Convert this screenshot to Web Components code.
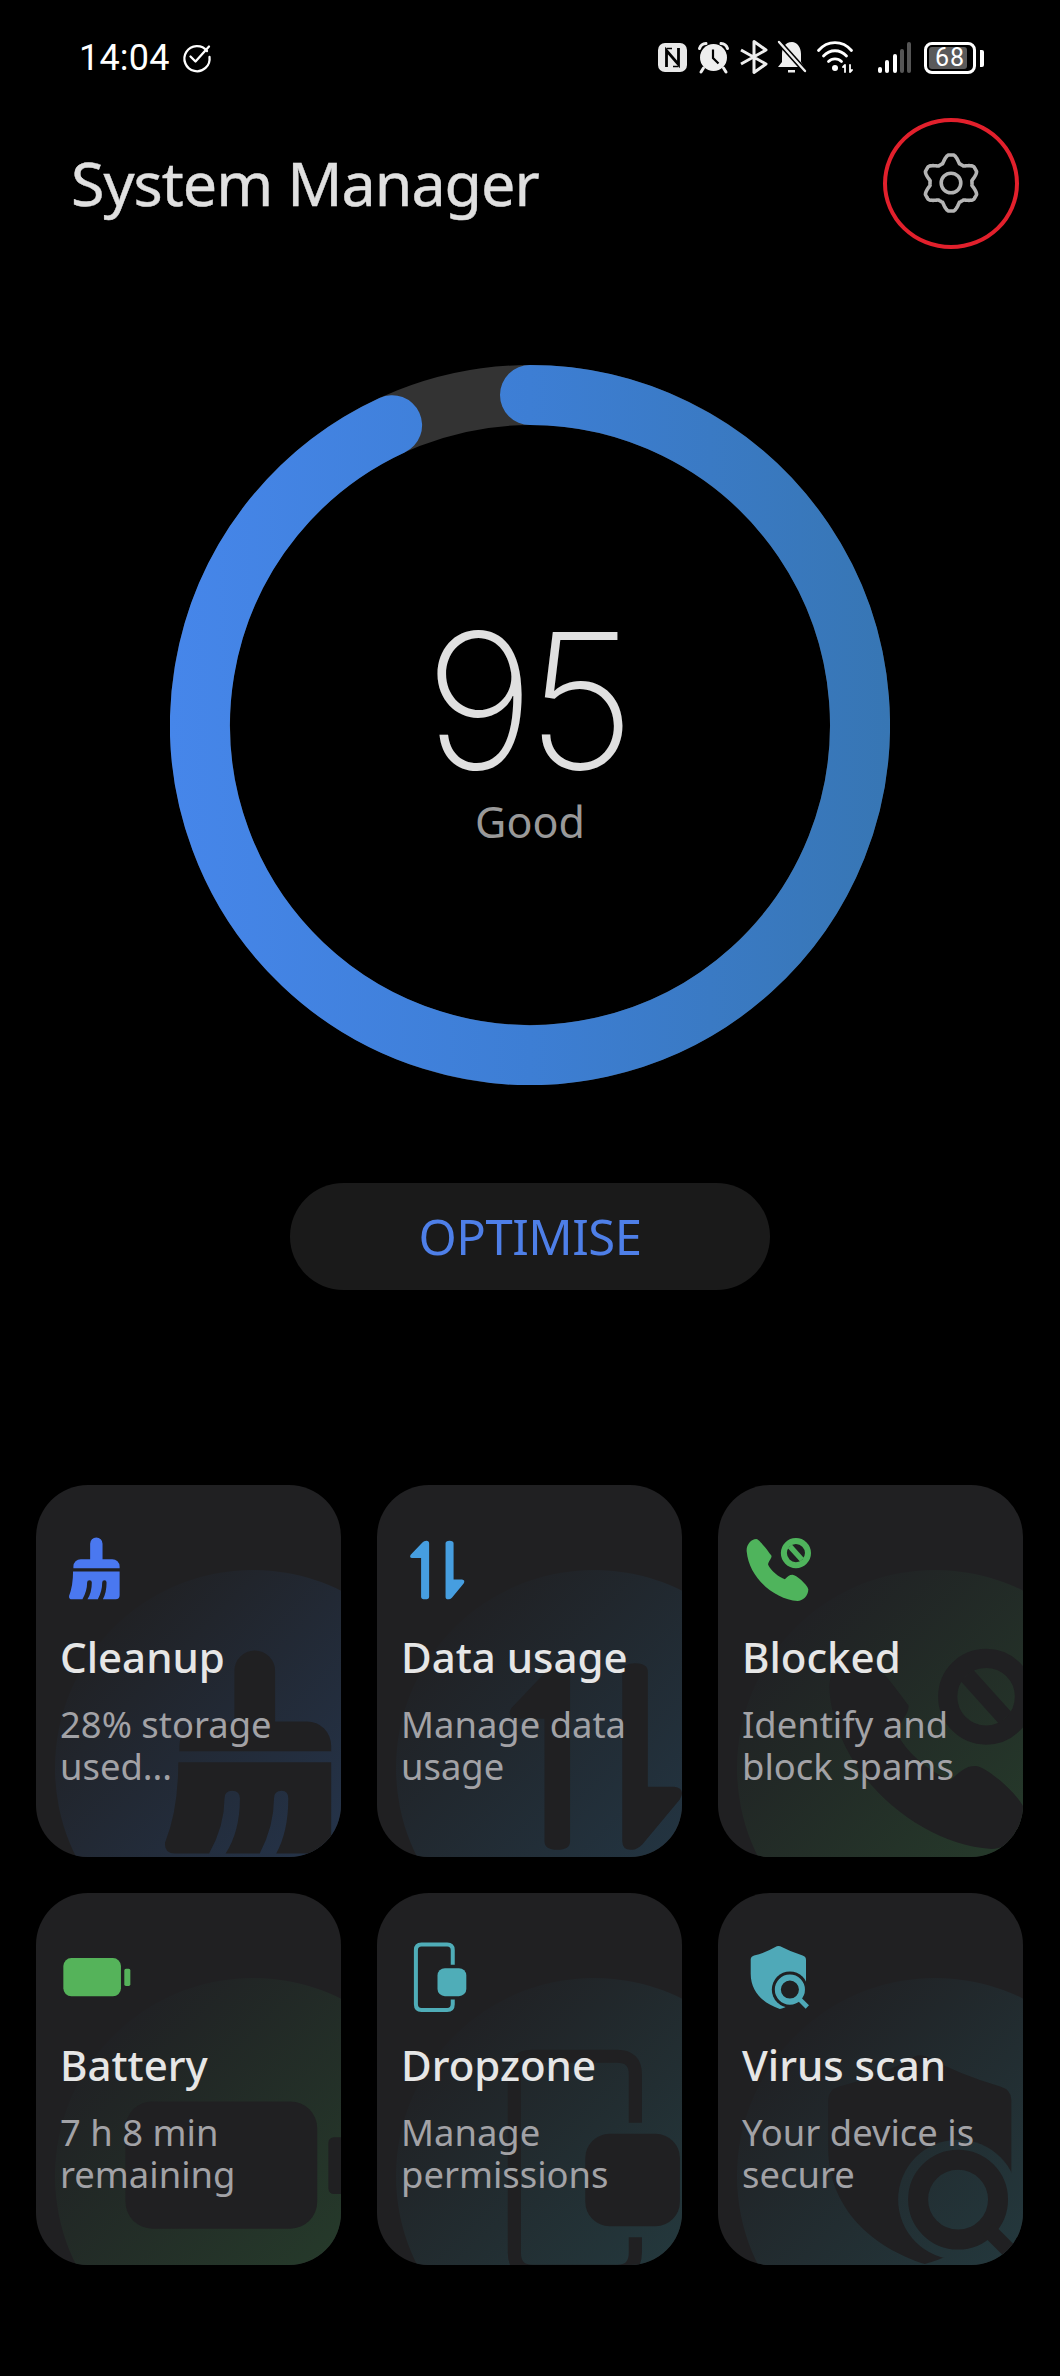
<!DOCTYPE html>
<html lang="en">
<head>
<meta charset="utf-8">
<title>System Manager</title>
<style>
  html, body { margin: 0; background: #000; }
  body { width: 1060px; height: 2376px; overflow: hidden; font-family: 'Noto Sans', sans-serif; }
</style>
</head>
<body>
<system-manager>
  <status-bar time="14:04" level="68"></status-bar>
  <page-header>System Manager</page-header>
  <score-ring score="95" label="Good"></score-ring>
  <action-button>OPTIMISE</action-button>
  <tool-grid>
    <tool-card icon="broom" tint="#25354d">
      <span slot="title">Cleanup</span>28% storage<br>used...
    </tool-card>
    <tool-card icon="arrows" tint="#233644">
      <span slot="title">Data usage</span>Manage data<br>usage
    </tool-card>
    <tool-card icon="phone" tint="#263c2b">
      <span slot="title">Blocked</span>Identify and<br>block spams
    </tool-card>
    <tool-card icon="battery" tint="#263c2b">
      <span slot="title">Battery</span>7 h 8 min<br>remaining
    </tool-card>
    <tool-card icon="dropzone" tint="#243a3f">
      <span slot="title">Dropzone</span>Manage<br>permissions
    </tool-card>
    <tool-card icon="shield" tint="#243a3f">
      <span slot="title">Virus scan</span>Your device is<br>secure
    </tool-card>
  </tool-grid>
</system-manager>

<script>
// Card icons, drawn on a 200x200 box. The same shapes are reused large behind the text.
const CARD_ICONS = {
  broom: {
    color: '#4a78f0', scale: 3.3, left: 106, top: 154,
    body: `<path fill="currentColor" d="M84 29a18.5 18.5 0 0 1 37 0V75h29a22 22 0 0 1 22 22v5H34v-5a22 22 0 0 1 22-22H84Z"/>
      <path fill="currentColor" d="M33 112H172V183Q172 195 160 195H122Q133 175 133 145Q133 138 127 138Q120 138 120 145Q120 170 107 195H76Q89 175 89 145Q89 138 82 138Q75 138 75 145Q75 170 61 195H30Q20 195 21 185Q33 155 33 112Z"/>`
  },
  arrows: {
    color: '#469ee0', scale: 3.2, left: 110, top: 157,
    body: `<path fill="currentColor" d="M78 28Q78 20 70 20Q62 20 58 25L23 62Q18 70 27 72H54V187Q54 195 66 195Q78 195 78 187Z"/>
      <path fill="currentColor" d="M127 28Q127 20 139 20Q151 20 151 28V136H176Q187 138 181 148L146 190Q140 196 135 195Q127 195 127 187Z"/>`
  },
  phone: {
    color: '#4fb45c', scale: 3.2, left: 103, top: 151,
    body: `<path fill="currentColor" d="M8 52C6 34 20 15 37 15C45 15 75 55 82 65C84 72 72 82 72 92C80 110 105 130 122 135C130 128 135 122 145 122C155 122 188 150 192 165C192 185 175 200 160 200C90 195 15 130 8 52Z"/>
      <circle cx="155" cy="57" r="36" fill="none" stroke="currentColor" stroke-width="18"/>
      <path d="M137 37L173 77" stroke="currentColor" stroke-width="16" fill="none"/>`
  },
  battery: {
    color: '#55b35a', scale: 3.35, left: 85, top: 155,
    body: `<rect x="4" y="48" width="172" height="114" rx="24" fill="currentColor"/>
      <rect x="186" y="80" width="18" height="51" rx="5" fill="currentColor"/>`
  },
  dropzone: {
    color: '#4fadb8', scale: 3.3, left: 95, top: 155,
    body: `<path fill="none" stroke="currentColor" stroke-width="12" d="M148.500 68V24Q148.500 7.500 132 7.500H55Q38.500 7.500 38.500 24V186Q38.500 203 55 203H132Q148.500 203 148.500 186V172"/>
      <rect x="103" y="78" width="86" height="84" rx="22" fill="currentColor"/>`
  },
  shield: {
    color: '#4fa9b8', scale: 3.33, left: 88, top: 149,
    body: `<mask id="lens-cut"><rect x="-20" y="-20" width="260" height="260" fill="#fff"/><circle cx="137" cy="142" r="54" fill="#000"/></mask>
      <path mask="url(#lens-cut)" fill="currentColor" d="M98 13Q102 11 108 13Q140 30 175 40Q185 43 185 52V140C185 170 140 190 107 200C60 185 20 150 20 95V52Q20 43 30 40Q65 32 98 13Z"/>
      <circle cx="137" cy="142" r="36" fill="none" stroke="currentColor" stroke-width="18"/>
      <path d="M164 169L189 194" stroke="currentColor" stroke-width="14" fill="none"/>`
  }
};

class SystemManager extends HTMLElement {
  constructor() {
    super();
    this.attachShadow({ mode: 'open' });
    this.shadowRoot.innerHTML = `
      <style>
        :host { display: flex; flex-direction: column; align-items: stretch; width: 1060px; color: #e0e0e0; }
      </style>
      <slot></slot>
    `;
  }
}

class StatusBar extends HTMLElement {
  constructor() {
    super();
    this.attachShadow({ mode: 'open' });
  }

  connectedCallback() {
    const time = this.getAttribute('time');
    const level = this.getAttribute('level');
    this.shadowRoot.innerHTML = `
      <style>
        :host { display: flex; align-items: flex-start; height: 116px; box-sizing: border-box; padding: 40px 0 0 79px; color: #fff; }
        .time { font: 400 36px/36px Roboto, sans-serif; letter-spacing: 0.2px; margin-top: 0; }
        .check { margin: 3px 0 0 13px; }
        .icons { display: flex; margin-left: auto; margin-right: 76px; align-items: flex-start; }
        svg { display: block; overflow: visible; }
        .battery { position: relative; box-sizing: border-box; width: 52px; height: 32px; margin: 2px 0 0 12px; border: 3px solid #fff; border-radius: 8px;
          font: 400 25px/26px Roboto, sans-serif; text-align: center; letter-spacing: 1px; }
        .fill { position: absolute; left: 2px; top: 2px; bottom: 2px; width: 38px; background: #5a5a5a; border-radius: 3px; }
        .level { position: relative; }
        .nub { width: 4px; height: 17px; margin: 10px 0 0 4px; background: #fff; border-radius: 0 2px 2px 0; }
      </style>
      <span class="time">${time}</span>
      <svg class="check" width="28" height="28" viewBox="0 0 28 28" fill="none" stroke="#fff" stroke-width="2.300" stroke-linecap="round" stroke-linejoin="round">
        <path d="M24 8A12.600 12.600 0 1 0 26.500 14"/>
        <path d="M7.500 13.500L12.500 18.500L26 3.500"/>
      </svg>
      <div class="icons">
        <svg width="29" height="29" viewBox="0 0 29 29" style="margin-top:3px">
          <rect width="29" height="29" rx="7" fill="#e8e8e8"/>
          <path d="M8.500 24V7.500L20.500 21.500V5" fill="none" stroke="#000" stroke-width="2.800"/>
          <path d="M8.500 5.500H14M15 23.500H20.500" fill="none" stroke="#000" stroke-width="1.600"/>
        </svg>
        <svg width="31" height="31" viewBox="0 0 31 31" style="margin:2px 0 0 11px">
          <circle cx="15.500" cy="15.500" r="13.500" fill="#eee"/>
          <path d="M15 7.500V16L20.500 21.500" fill="none" stroke="#000" stroke-width="2.200"/>
          <path d="M1.500 6.500Q3 1.800 8 1.500M29.500 6.500Q28 1.800 23 1.500M5.500 26L3 30M25.500 26L28 30" fill="none" stroke="#eee" stroke-width="3" stroke-linecap="round"/>
        </svg>
        <svg width="28" height="34" viewBox="0 0 28 34" style="margin:0 0 0 11px" fill="none" stroke="#eee" stroke-width="3" stroke-linejoin="round">
          <path d="M1 10L26 24L14 32.500V1.500L26 10L1 24"/>
        </svg>
        <svg width="29" height="34" viewBox="0 0 29 34" style="margin:1px 0 0 9px">
          <path d="M15 1C8 1 5 7 5 13V21L1 26H27L24 21V13C24 6 20 1 15 1Z" fill="#eee"/>
          <path d="M11 29H18V31.500H11Z" fill="#eee"/>
          <path d="M2 1L28 30" stroke="#000" stroke-width="5.500"/>
          <path d="M2 1L28 30" stroke="#eee" stroke-width="2.400" stroke-linecap="round"/>
        </svg>
        <svg width="36" height="31" viewBox="0 0 36 31" style="margin:1px 0 0 11px" fill="none" stroke="#fff" stroke-width="2.800" stroke-linecap="round">
          <path d="M1.500 9.500C10.500 -1 25.500 -1 34.500 9.500"/>
          <path d="M6.500 15C13 8 23 8 29.500 15"/>
          <path d="M11.500 20.500C15 17 21 17 24.500 20.500"/>
          <circle cx="18" cy="27" r="3" fill="#fff" stroke="none"/>
          <path d="M28 31V24M26 26L28 24M33 24V31M33 31L35 29" stroke-width="1.800"/>
        </svg>
        <svg width="34" height="31" viewBox="0 0 34 31" style="margin:2px 0 0 25px">
          <rect x="0" y="25" width="4" height="6" rx="2" fill="#fff"/>
          <rect x="7" y="18" width="4" height="13" rx="2" fill="#fff"/>
          <rect x="15" y="12" width="4" height="19" rx="2" fill="#fff"/>
          <rect x="22" y="7" width="4" height="24" rx="2" fill="#555"/>
          <rect x="29" y="0" width="4" height="31" rx="2" fill="#555"/>
        </svg>
        <div class="battery"><span class="fill"></span><span class="level">${level}</span></div>
        <span class="nub"></span>
      </div>
    `;
  }
}

class PageHeader extends HTMLElement {
  constructor() {
    super();
    this.attachShadow({ mode: 'open' });
  }

  gearPath() {
    // Six flat topped teeth around a circle
    const points = [];
    for (let i = 0; i < 180; i++) {
      const angle = (i / 180) * Math.PI * 2;
      const wave = Math.max(-1, Math.min(1, 1.25 * Math.cos(6 * (angle - Math.PI / 2))));
      const radius = 24.5 + 3.5 * wave;
      points.push(`${(32 + radius * Math.cos(angle)).toFixed(2)} ${(32 + radius * Math.sin(angle)).toFixed(2)}`);
    }
    return `M${points.join('L')}Z`;
  }

  connectedCallback() {
    this.shadowRoot.innerHTML = `
      <style>
        :host { display: flex; align-items: center; height: 134px; padding: 0 41px 0 71px; position: relative; }
        .title { font: 400 61px/80px 'Noto Sans', sans-serif; color: #e0e0e0; letter-spacing: -1px; -webkit-text-stroke: 0.4px #e0e0e0; }
        .gear-wrap { margin-left: auto; width: 136px; height: 131px; display: flex; align-items: center; justify-content: center; position: relative; }
        .circle { position: absolute; inset: 0; box-sizing: border-box; border: 4px solid #e2202c; border-radius: 50%; }
      </style>
      <span class="title"><slot></slot></span>
      <div class="gear-wrap">
        <svg width="64" height="64" viewBox="0 0 64 64" fill="none" stroke="#b4b4b4" stroke-width="3.600" stroke-linejoin="round">
          <path d="${this.gearPath()}"/>
          <circle cx="32" cy="32" r="9.800"/>
        </svg>
        <span class="circle"></span>
      </div>
    `;
  }
}

class ScoreRing extends HTMLElement {
  constructor() {
    super();
    this.attachShadow({ mode: 'open' });
  }

  connectedCallback() {
    this.shadowRoot.innerHTML = `
      <style>
        :host { display: grid; width: 720px; height: 720px; margin: 115px auto 0; }
        svg, .center { grid-area: 1 / 1; }
        .center { display: flex; flex-direction: column; align-items: center; padding-top: 261px; }
        .score { font: 250 188px/150px Inter, sans-serif; color: #e0e0e0; letter-spacing: -8px; margin-right: 8px; }
        .label { font: 400 43px/56px 'Noto Sans', sans-serif; color: #999; margin-top: 18px; }
      </style>
      <svg width="720" height="720" viewBox="0 0 720 720" fill="none" stroke-width="60">
        <defs>
          <linearGradient id="ring-fill" gradientUnits="userSpaceOnUse" x1="0" y1="200" x2="720" y2="200">
            <stop offset="0" stop-color="#4686ea"/>
            <stop offset="0.5" stop-color="#3d7ed4"/>
            <stop offset="1" stop-color="#3776b4"/>
          </linearGradient>
        </defs>
        <circle cx="360" cy="360" r="330" stroke="#333"/>
        <path d="M360 30A330 330 0 1 1 222.100 60.200" stroke="url(#ring-fill)" stroke-linecap="round"/>
      </svg>
      <div class="center">
        <span class="score">${this.getAttribute('score')}</span>
        <span class="label">${this.getAttribute('label')}</span>
      </div>
    `;
  }
}

class ActionButton extends HTMLElement {
  constructor() {
    super();
    this.attachShadow({ mode: 'open' });
    this.shadowRoot.innerHTML = `
      <style>
        :host { display: flex; align-items: center; justify-content: center; box-sizing: border-box; padding-bottom: 2px; width: 480px; height: 107px; margin: 98px auto 0; border-radius: 54px;
          background: #1a1a1a; color: #4e7fe8; font: 400 49px/60px 'Noto Sans', sans-serif; letter-spacing: -0.5px; }
      </style>
      <slot></slot>
    `;
  }
}

class ToolGrid extends HTMLElement {
  constructor() {
    super();
    this.attachShadow({ mode: 'open' });
    this.shadowRoot.innerHTML = `
      <style>
        :host { display: grid; grid-template-columns: repeat(3, 305px); gap: 36px; margin: 195px 0 0 36px; }
      </style>
      <slot></slot>
    `;
  }
}

class ToolCard extends HTMLElement {
  constructor() {
    super();
    this.attachShadow({ mode: 'open' });
  }

  connectedCallback() {
    const icon = CARD_ICONS[this.getAttribute('icon')];
    const tint = this.getAttribute('tint');
    const bigSize = Math.round(200 * icon.scale / 3);
    this.shadowRoot.innerHTML = `
      <style>
        :host { display: block; position: relative; overflow: hidden; box-sizing: border-box; height: 372px; padding: 49px 0 0 24px; border-radius: 52px; background: #202022; }
        .blob { position: absolute; left: 19px; top: 85px; width: 396px; height: 396px; border-radius: 50%; background: linear-gradient(135deg, #202124 14%, ${tint} 76%); }
        .big { position: absolute; left: ${icon.left}px; top: ${icon.top}px; color: #202022; overflow: visible; }
        .small { display: block; position: relative; left: 2px; color: ${icon.color}; overflow: visible; }
        .title, .desc { display: block; position: relative; }
        .title { font: 500 42px/56px 'Noto Sans', sans-serif; color: #e6e6e6; margin-top: 28px; }
        .desc { font: 400 36.400px/42px 'Noto Sans', sans-serif; color: #a2a2a6; margin-top: 18px; white-space: nowrap; }
      </style>
      <div class="blob"></div>
      <svg class="big" width="${bigSize}" height="${bigSize}" viewBox="0 0 200 200">${icon.body.replace(/lens-cut/g, 'lens-cut-big')}</svg>
      <svg class="small" width="67" height="67" viewBox="0 0 200 200">${icon.body}</svg>
      <span class="title"><slot name="title"></slot></span>
      <span class="desc"><slot></slot></span>
    `;
  }
}

customElements.define('system-manager', SystemManager);
customElements.define('status-bar', StatusBar);
customElements.define('page-header', PageHeader);
customElements.define('score-ring', ScoreRing);
customElements.define('action-button', ActionButton);
customElements.define('tool-grid', ToolGrid);
customElements.define('tool-card', ToolCard);
</script>
</body>
</html>
